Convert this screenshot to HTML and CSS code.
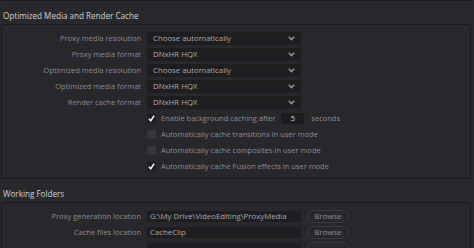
FILE: index.html
```html
<!DOCTYPE html>
<html lang="en">
<head>
    <meta charset="UTF-8">
    <title>Project Settings</title>
    <link rel="stylesheet" href="styles.css">
</head>
<body>
    <!-- end of previous panel -->
    <div class="panel panel-cut"></div>

    <div class="section-title">Optimized Media and Render Cache</div>
    <div class="panel">
        <div class="row">
            <span class="label">Proxy media resolution</span>
            <div class="select">Choose automatically <svg class="chev" width="7" height="5" viewBox="0 0 7 5"><path d="M0.8 0.8 L3.5 3.8 L6.2 0.8" fill="none" stroke="#9a9a9e" stroke-width="1.4"/></svg></div>
        </div>
        <div class="row">
            <span class="label">Proxy media format</span>
            <div class="select">DNxHR HQX <svg class="chev" width="7" height="5" viewBox="0 0 7 5"><path d="M0.8 0.8 L3.5 3.8 L6.2 0.8" fill="none" stroke="#9a9a9e" stroke-width="1.4"/></svg></div>
        </div>
        <div class="row">
            <span class="label">Optimized media resolution</span>
            <div class="select">Choose automatically <svg class="chev" width="7" height="5" viewBox="0 0 7 5"><path d="M0.8 0.8 L3.5 3.8 L6.2 0.8" fill="none" stroke="#9a9a9e" stroke-width="1.4"/></svg></div>
        </div>
        <div class="row">
            <span class="label">Optimized media format</span>
            <div class="select">DNxHR HQX <svg class="chev" width="7" height="5" viewBox="0 0 7 5"><path d="M0.8 0.8 L3.5 3.8 L6.2 0.8" fill="none" stroke="#9a9a9e" stroke-width="1.4"/></svg></div>
        </div>
        <div class="row">
            <span class="label">Render cache format</span>
            <div class="select">DNxHR HQX <svg class="chev" width="7" height="5" viewBox="0 0 7 5"><path d="M0.8 0.8 L3.5 3.8 L6.2 0.8" fill="none" stroke="#9a9a9e" stroke-width="1.4"/></svg></div>
        </div>
        <div class="row">
            <span class="label"></span>
            <span class="box on"><svg width="9" height="9" viewBox="0 0 9 9"><path d="M2 4.8 L3.7 6.8 L7.2 1.6" fill="none" stroke="#f2f2f2" stroke-width="1.6"/></svg></span>
            <span class="check-text">Enable background caching after</span>
            <span class="num">5</span>
            <span class="check-text unit">seconds</span>
        </div>
        <div class="row">
            <span class="label"></span>
            <span class="box"></span>
            <span class="check-text">Automatically cache transitions in user mode</span>
        </div>
        <div class="row">
            <span class="label"></span>
            <span class="box"></span>
            <span class="check-text">Automatically cache composites in user mode</span>
        </div>
        <div class="row">
            <span class="label"></span>
            <span class="box on"><svg width="9" height="9" viewBox="0 0 9 9"><path d="M2 4.8 L3.7 6.8 L7.2 1.6" fill="none" stroke="#f2f2f2" stroke-width="1.6"/></svg></span>
            <span class="check-text">Automatically cache Fusion effects in user mode</span>
        </div>
    </div>

    <div class="section-title">Working Folders</div>
    <div class="panel">
        <div class="row">
            <span class="label">Proxy generation location</span>
            <div class="field">G:\My Drive\VideoEditing\ProxyMedia</div>
            <button class="browse">Browse</button>
        </div>
        <div class="row">
            <span class="label">Cache files location</span>
            <div class="field">CacheClip</div>
            <button class="browse">Browse</button>
        </div>
        <div class="row">
            <span class="label"></span>
            <div class="field"></div>
            <button class="browse"></button>
        </div>
    </div>
</body>
</html>
```

FILE: styles.css
```css
body {
    margin: 0;
    background-color: #28282d;
    font-family: "Open Sans", "Noto Sans", sans-serif;
    font-size: 7.5px;
    color: #8c8c91;
    overflow: hidden;
    height: 248px;
}

/* Panels */
.panel {
    margin: 0 3px 0 1px;
    border: 1px solid #19191c;
    border-radius: 2px;
    background-color: #27272c;
    padding: 5px 0 4px 0;
}
.panel-cut {
    height: 2px;
    padding: 0;
    border-top: none;
    margin-top: -2px;
}

.section-title {
    height: 23px;
    box-sizing: border-box;
    padding: 8px 3px 0 3px;
    line-height: 14px;
    font-size: 8.1px;
    color: #d2d2d4;
}

/* Form rows */
.row {
    display: flex;
    align-items: center;
    height: 16px;
}
.label {
    width: 139px;
    margin-right: 6px;
    text-align: right;
    white-space: nowrap;
}

.select {
    width: 154px;
    height: 13px;
    box-sizing: border-box;
    background-color: #1e1e21;
    color: #a8a8ac;
    font-size: 7.8px;
    padding: 0 6px 0 6px;
    display: flex;
    align-items: center;
    justify-content: space-between;
    border-radius: 1px;
}

/* Checkboxes */
.box {
    width: 9px;
    height: 9px;
    background-color: #36363a;
    border-radius: 1px;
    margin-right: 5px;
    display: flex;
}
.box.on {
    background-color: #1d1d20;
}
.check-text {
    color: #8e8e93;
    white-space: nowrap;
}
.num {
    width: 23px;
    height: 11px;
    margin-left: 6px;
    background-color: #1c1c1f;
    color: #dedee0;
    text-align: center;
    line-height: 11px;
}
.unit {
    margin-left: 7px;
}

/* Folders */
.field {
    width: 154px;
    height: 11px;
    box-sizing: border-box;
    background-color: #1e1e21;
    color: #a8a8ac;
    font-size: 7.8px;
    padding: 0 3px;
    line-height: 11px;
    white-space: nowrap;
}
.browse {
    margin-left: 6px;
    width: 42px;
    height: 13px;
    padding: 0;
    border: 1px solid #3a3a3f;
    border-radius: 7px;
    background-color: #27272c;
    color: #8f8f94;
    font-family: inherit;
    font-size: 7.8px;
    line-height: 11px;
}
```
